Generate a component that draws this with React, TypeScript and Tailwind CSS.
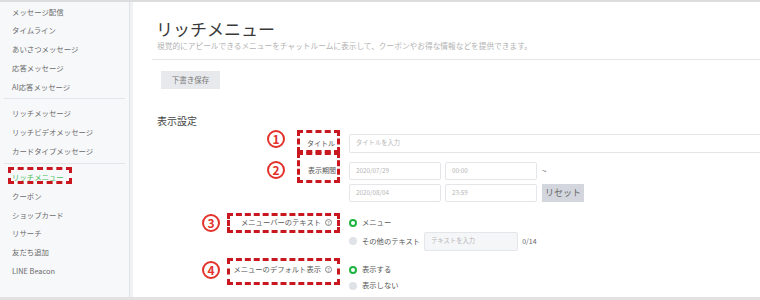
import type { ReactNode } from 'react';

const sideGroups: string[][] = [
  ['メッセージ配信', 'タイムライン', 'あいさつメッセージ', '応答メッセージ', 'AI応答メッセージ'],
  ['リッチメッセージ', 'リッチビデオメッセージ', 'カードタイプメッセージ'],
  ['リッチメニュー', 'クーポン', 'ショップカード', 'リサーチ', '友だち追加', 'LINE Beacon'],
];

function Badge({ n, className }: { n: string; className: string }) {
  return (
    <span
      className={`absolute flex h-[18px] w-[18px] items-center justify-center rounded-full border-2 border-[#e3322b] text-[12px] font-bold leading-none text-[#e3322b] ${className}`}
    >
      {n}
    </span>
  );
}

function Help() {
  return (
    <span className="ml-[4px] inline-flex h-[7px] w-[7px] items-center justify-center rounded-full border border-[#888] text-[5px] leading-none text-[#777]">
      ?
    </span>
  );
}

function Radio({ on, children }: { on?: boolean; children: ReactNode }) {
  return (
    <div className="flex items-center gap-[5px] text-[7.3px] text-[#555]">
      {on ? (
        <span className="h-[8px] w-[8px] rounded-full border-2 border-[#1db440] bg-white" />
      ) : (
        <span className="h-[8px] w-[8px] rounded-full bg-[#dfe2e6]" />
      )}
      <span>{children}</span>
    </div>
  );
}

function Field({ value, className }: { value: string; className: string }) {
  return (
    <div
      className={`flex items-center rounded-[2px] border border-[#e4e6e9] bg-white pl-[6px] text-[6.3px] text-[#b5b5b5] ${className}`}
    >
      {value}
    </div>
  );
}

export default function App() {
  return (
    <div className="flex h-[300px] w-[760px] flex-col overflow-hidden border-t-2 border-b-[3px] border-t-[#dcdcdc] border-b-[#e2e2e2] bg-white font-['Noto_Sans_CJK_JP','Noto_Sans',sans-serif]">
      <div className="flex min-h-0 flex-1">
        {/* sidebar */}
        <aside className="w-[130px] shrink-0 border-r border-[#dfe1e5] bg-[#f7f8fa]">
          {sideGroups.map((group, gi) => (
            <div key={gi}>
              {gi > 0 && <div className="mx-[4px] mt-[3px] mb-[4px] h-px bg-[#e3e5e9]" />}
              {group.map((item) => {
                const active = item === 'リッチメニュー';
                return (
                  <div
                    key={item}
                    className={`relative flex h-[18.7px] items-center pl-[12px] text-[7.4px] ${
                      active ? 'text-[#45c056]' : 'text-[#6a6a6a]'
                    }`}
                  >
                    {item}
                    {active && (
                      <span className="absolute left-[8px] top-[-1px] h-[17px] w-[64px] border-[3px] border-dashed border-[#c8171e]" />
                    )}
                  </div>
                );
              })}
            </div>
          ))}
        </aside>
        <div className="w-[3px] shrink-0 bg-[#f1f2f4]" />

        {/* main */}
        <main className="min-w-0 flex-1 pl-[19px]">
          <h1 className="ml-[4px] mt-[18px] text-[17px] leading-none text-[#3a3a3a]">リッチメニュー</h1>
          <p className="ml-[5px] mt-[5px] text-[7.7px] leading-none text-[#b3b3b3]">
            視覚的にアピールできるメニューをチャットルームに表示して、クーポンやお得な情報などを提供できます。
          </p>
          <div className="mt-[9px] h-px bg-[#e6e6e6]" />
          <button className="ml-[9px] mt-[11px] flex h-[18px] w-[59px] items-center justify-center bg-[#e7e9ed] text-[7.5px] text-[#777]">
            下書き保存
          </button>

          <h2 className="ml-[5px] mt-[27px] text-[10px] leading-none text-[#444]">表示設定</h2>

          {/* ① title */}
          <div className="mt-[8px] flex">
            <div className="relative flex h-[19px] w-[188px] shrink-0 items-center justify-end pr-[5px] text-[7px] text-[#555]">
              タイトル
              <Badge n="1" className="left-[115px] top-[-4px]" />
              <span className="absolute left-[145px] right-0 top-[-4px] h-[23px] border-[3px] border-dashed border-[#c8171e]" />
            </div>
            <Field value="タイトルを入力" className="ml-[9px] h-[19px] w-[430px] shrink-0" />
          </div>

          {/* ② period */}
          <div className="mt-[9px] flex">
            <div className="relative flex h-[18px] w-[188px] shrink-0 items-center justify-end pr-[4px] text-[7px] text-[#555]">
              表示期間
              <Badge n="2" className="left-[115px] top-[-1px]" />
              <span className="absolute left-[145px] right-0 top-[-10px] h-[31px] border-[3px] border-dashed border-[#c8171e]" />
            </div>
            <div className="ml-[9px] flex flex-col gap-[4px]">
              <div className="flex items-center gap-[4px]">
                <Field value="2020/07/29" className="h-[18px] w-[92px]" />
                <Field value="00:00" className="h-[18px] w-[92px]" />
                <span className="ml-[1px] text-[8px] text-[#666]">~</span>
              </div>
              <div className="flex items-center gap-[4px]">
                <Field value="2020/08/04" className="h-[18px] w-[92px]" />
                <Field value="23:59" className="h-[18px] w-[92px]" />
                <button className="ml-[1px] flex h-[18px] w-[42px] items-center justify-center bg-[#d3d7dd] text-[9px] text-[#666]">
                  リセット
                </button>
              </div>
            </div>
          </div>

          {/* ③ menu bar text */}
          <div className="mt-[12px] flex">
            <div className="relative flex h-[18px] w-[188px] shrink-0 items-center justify-end pr-[8px] text-[7.3px] text-[#555]">
              メニューバーのテキスト
              <Help />
              <Badge n="3" className="left-[50px] top-0" />
              <span className="absolute left-[75px] right-0 top-[-1px] h-[20px] border-[3px] border-dashed border-[#c8171e]" />
            </div>
            <div className="ml-[9px] flex flex-col">
              <div className="flex h-[18px] items-center">
                <Radio on>メニュー</Radio>
              </div>
              <div className="flex h-[19px] items-center">
                <Radio>その他のテキスト</Radio>
                <Field value="テキストを入力" className="ml-[4px] h-[19px] w-[94px] !bg-[#f5f6f8]" />
                <span className="ml-[4px] text-[7px] text-[#666]">0/14</span>
              </div>
            </div>
          </div>

          {/* ④ default display */}
          <div className="mt-[11px] flex">
            <div className="relative flex h-[16px] w-[188px] shrink-0 items-center justify-end pr-[8px] text-[7.3px] text-[#555]">
              メニューのデフォルト表示
              <Help />
              <Badge n="4" className="left-[50px] top-[-1px]" />
              <span className="absolute left-[75px] right-0 top-[-4px] h-[27px] border-[3px] border-dashed border-[#c8171e]" />
            </div>
            <div className="ml-[9px] flex flex-col">
              <div className="flex h-[16px] items-center">
                <Radio on>表示する</Radio>
              </div>
              <div className="flex h-[16px] items-center">
                <Radio>表示しない</Radio>
              </div>
            </div>
          </div>
        </main>
      </div>
    </div>
  );
}
